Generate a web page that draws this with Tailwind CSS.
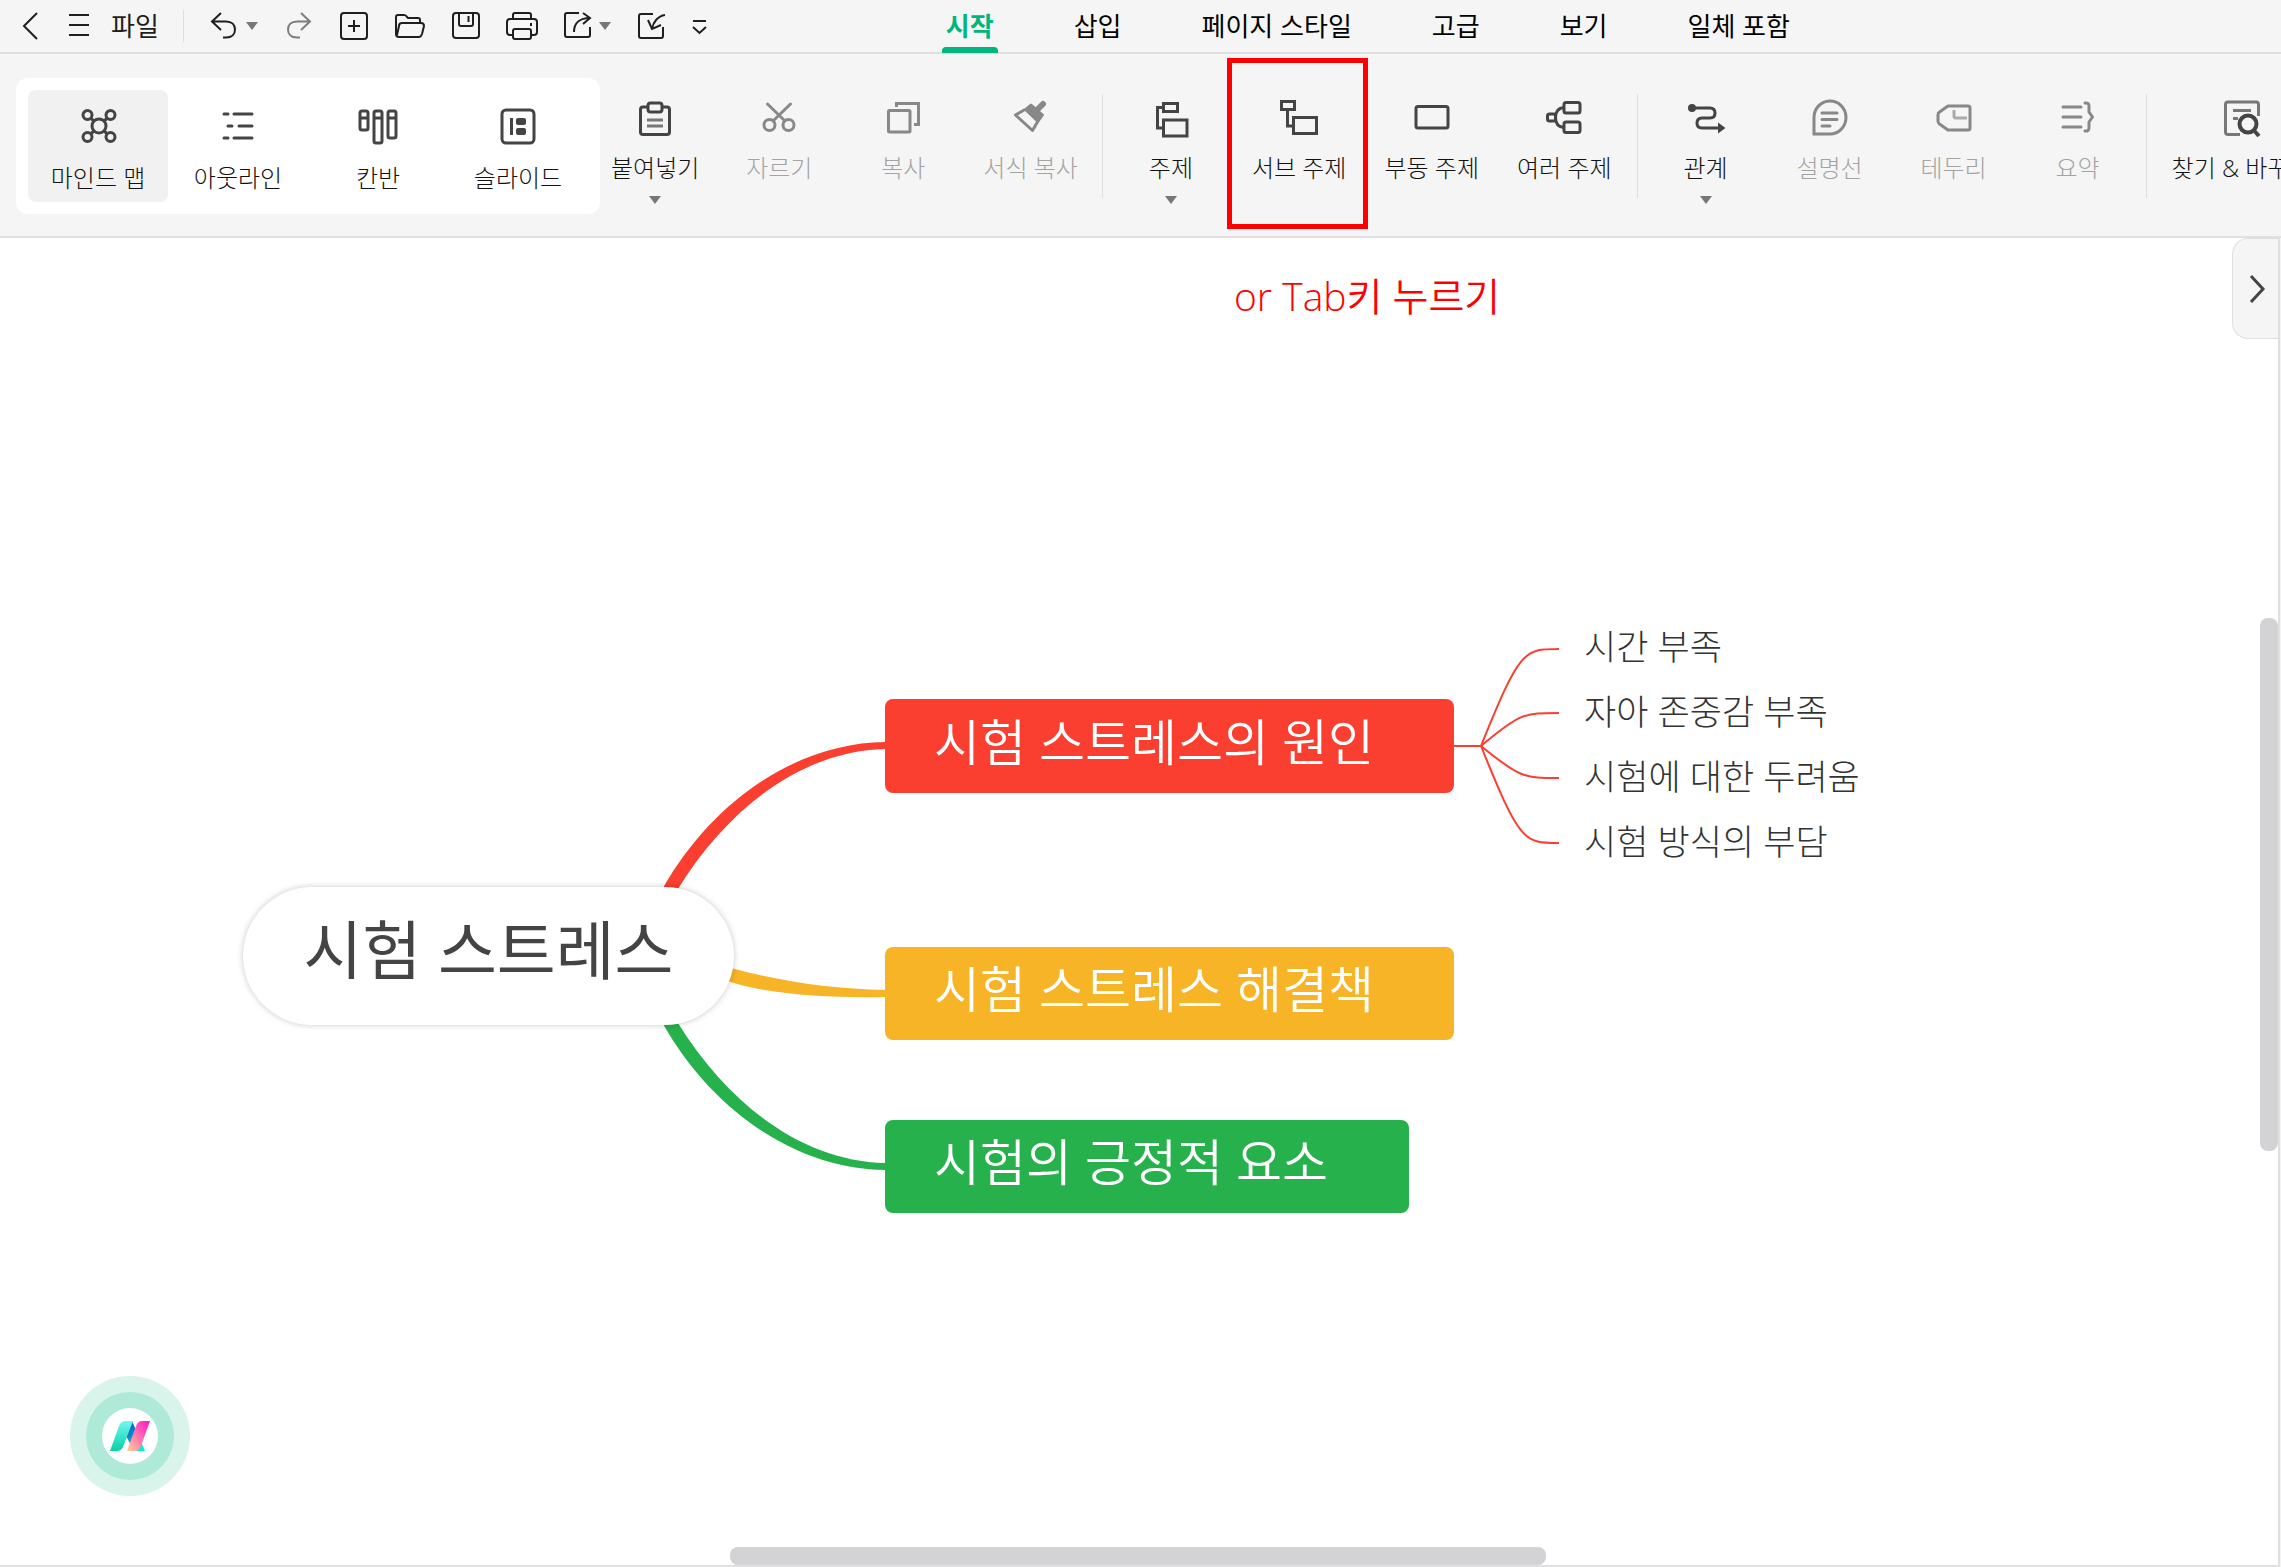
<!DOCTYPE html>
<html lang="ko">
<head>
<meta charset="utf-8">
<title>시험 스트레스</title>
<script src="https://cdn.jsdelivr.net/npm/@tailwindcss/browser@4"></script>
</head>
<body class="h-screen flex flex-col overflow-hidden bg-[#f4f4f4] text-black font-['Open_Sans','Noto_Sans_CJK_KR',sans-serif]">

<!-- Title bar: file actions and tabs -->
<header class="flex items-center h-[54px] shrink-0 bg-[#f5f5f5] border-b-2 border-[#e0e0e0] text-[#1f1f1f] pl-[15px] whitespace-nowrap">
  <div class="flex items-center gap-4">
    <button aria-label="뒤로"><svg class="block size-8" viewBox="0 0 32 32" fill="none" stroke="currentColor" stroke-width="2"><path d="M22 3L9 16L22 29"/></svg></button>
    <button aria-label="메뉴"><svg class="block size-8" viewBox="0 0 32 32" fill="none" stroke="currentColor" stroke-width="2"><path d="M6 5H26M6 15H26M6 25H26"/></svg></button>
    <button class="text-[26px] leading-8">파일</button>
  </div>
  <div class="w-px h-8 bg-[#dedede] ml-6 mr-6"></div>
  <div class="flex items-center gap-6">
    <div class="flex items-center gap-[6px]">
      <button aria-label="실행 취소"><svg class="block size-8" viewBox="0 0 32 32" fill="none" stroke="currentColor" stroke-width="2"><path d="M13 3L4 11.500L13 20M4.500 11.500H18C24 11.500 27 15 27 19.500S24 27.500 18 27.500H15"/></svg></button>
      <button aria-label="실행 취소 목록"><svg class="block w-3 h-2 text-[#777]" viewBox="0 0 12 8" fill="currentColor"><path d="M0 0H12L6 8Z"/></svg></button>
    </div>
    <button aria-label="다시 실행" class="text-[#7d7d7d]"><svg class="block size-8" viewBox="0 0 32 32" fill="none" stroke="currentColor" stroke-width="2"><path d="M19 3L28 11.500L19 20M27.500 11.500H15C9 11.500 6 15 6 19.500S9 27.500 15 27.500H18"/></svg></button>
    <button aria-label="새로 만들기"><svg class="block size-8" viewBox="0 0 32 32" fill="none" stroke="currentColor" stroke-width="2"><rect x="3" y="3" width="26" height="26" rx="3"/><path d="M10 16H22M16 10V22"/></svg></button>
    <button aria-label="열기"><svg class="block size-8" viewBox="0 0 32 32" fill="none" stroke="currentColor" stroke-width="2" stroke-linejoin="round"><path d="M2 24V7Q2 5 4 5H10Q12 5 13 7L14 8H24Q26 8 26 10V13"/><path d="M2 24Q2 27 5 27H25Q27 27 28 24L30 16Q30 13 27 13H8Q5 13 5 16L3 25"/></svg></button>
    <button aria-label="저장"><svg class="block size-8" viewBox="0 0 32 32" fill="none" stroke="currentColor" stroke-width="2"><rect x="3" y="3" width="26" height="25" rx="3"/><path d="M9 3V14Q9 16 11 16H21Q23 16 23 14V3M18.500 6V12"/></svg></button>
    <button aria-label="인쇄"><svg class="block size-8" viewBox="0 0 32 32" fill="none" stroke="currentColor" stroke-width="2"><path d="M7 9V5Q7 3 9 3H23Q25 3 25 5V9"/><path d="M7 25H4Q1 25 1 22V12Q1 9 4 9H28Q31 9 31 12V22Q31 25 28 25H25M25 13V16"/><rect x="7" y="19" width="18" height="10" rx="2"/></svg></button>
    <div class="flex items-center gap-[5px]">
      <button aria-label="내보내기"><svg class="block size-8" viewBox="0 0 32 32" fill="none" stroke="currentColor" stroke-width="2"><path d="M17 3H5Q3 3 3 5V25Q3 27 5 27H26Q28 27 28 25V17M21 3L28 8L21 14M28 8C18 8 12 13 12 22"/></svg></button>
      <button aria-label="내보내기 목록"><svg class="block w-3 h-2 text-[#777]" viewBox="0 0 12 8" fill="currentColor"><path d="M0 0H12L6 8Z"/></svg></button>
    </div>
    <div class="flex items-center gap-4">
      <button aria-label="가져오기"><svg class="block size-8" viewBox="0 0 32 32" fill="none" stroke="currentColor" stroke-width="2"><path d="M18 4H6Q4 4 4 6V26Q4 28 6 28H26Q28 28 28 26V17M30 5C23 6 18 12 17 19M13 10L17 19L26 15"/></svg></button>
      <button aria-label="더 보기"><svg class="block size-8" viewBox="0 0 32 32" fill="none" stroke="currentColor" stroke-width="2"><path d="M10 11H23M10 17L16.500 23L23 17"/></svg></button>
    </div>
  </div>
  <nav class="flex items-stretch gap-20 h-[52px] ml-[231px] text-[26px] leading-[52px] text-black">
    <a href="#" class="relative font-bold text-[#00b67f]">시작<span class="absolute inset-x-[-4px] bottom-[-1px] h-[6px] rounded-t bg-[#00b67f]"></span></a>
    <a href="#">삽입</a>
    <a href="#">페이지 스타일</a>
    <a href="#">고급</a>
    <a href="#">보기</a>
    <a href="#">일체 포함</a>
  </nav>
</header>

<!-- Ribbon -->
<section class="flex items-start h-[184px] shrink-0 overflow-hidden bg-[#f5f5f5] border-b-2 border-[#e0e0e0] pl-4 pt-6 whitespace-nowrap text-2xl/6 font-light text-[#111]">
  <div class="flex shrink-0 bg-white rounded-xl p-3 *:flex *:flex-col *:items-center *:gap-5 *:w-[140px] *:h-28 *:pt-4 *:rounded-lg">
    <button class="bg-[#f1f1f1]"><svg class="size-10" viewBox="0 0 40 40" fill="none" stroke="#444" stroke-width="3"><circle cx="21" cy="20" r="7"/><circle cx="9.500" cy="9" r="4.500"/><circle cx="32.500" cy="9" r="4.500"/><circle cx="9.500" cy="31" r="4.500"/><circle cx="32.500" cy="31" r="4.500"/><path d="M12.500 12L16.500 15.500M29.500 12L25.500 15.500M12.500 28L16.500 24.500M29.500 28L25.500 24.500"/></svg>마인드 맵</button>
    <button><svg class="size-10" viewBox="0 0 40 40" fill="none" stroke="#444" stroke-width="3" stroke-linecap="round"><path d="M6 8H10M16 8H34M10 20H14M21 20H34M6 32H10M16 32H34"/></svg>아웃라인</button>
    <button><svg class="size-10" viewBox="0 0 40 40" fill="none" stroke="#444" stroke-width="3"><rect x="2" y="5" width="8" height="19" rx="2"/><rect x="16" y="5" width="8" height="32" rx="2"/><rect x="30" y="5" width="8" height="27" rx="2"/><path d="M2 12H10M16 12H24M30 12H38"/></svg>칸반</button>
    <button><svg class="size-10" viewBox="0 0 40 40" fill="none" stroke="#444" stroke-width="3"><rect x="4" y="4" width="32" height="33" rx="4"/><path d="M13.500 12V29"/><g fill="#444" stroke="none"><rect x="18" y="12" width="10" height="7" rx="2"/><rect x="18" y="22" width="10" height="7" rx="2"/></g></svg>슬라이드</button>
  </div>

  <div class="flex shrink-0 gap-6 ml-[5px] pt-5 *:flex *:flex-col *:items-center *:min-w-[100px] *:px-[6px]">
    <button><svg class="size-10 mb-[18px]" viewBox="0 0 40 40" fill="none" stroke="#444" stroke-width="3"><path d="M13 9H8Q5.500 9 5.500 11.500V34Q5.500 36.500 8 36.500H32Q34.500 36.500 34.500 34V11.500Q34.500 9 32 9H27"/><rect x="13" y="5" width="14" height="9" rx="2.500"/><path stroke="#777" d="M12 22H28M12 28H28"/></svg>붙여넣기<svg class="w-3 h-2 mt-4" viewBox="0 0 12 8" fill="#777"><path d="M0 0H12L6 8Z"/></svg></button>
    <button disabled class="text-[#a3a3a3]"><svg class="size-10 mb-[18px]" viewBox="0 0 40 40" fill="none" stroke="#888" stroke-width="3" stroke-linecap="round"><circle cx="10.500" cy="27" r="5.500"/><circle cx="29.500" cy="27" r="5.500"/><path d="M31.500 6L14 23M8.500 6L26 23"/></svg>자르기</button>
    <button disabled class="text-[#a3a3a3]"><svg class="size-10 mb-[18px]" viewBox="0 0 40 40" fill="none" stroke="#888" stroke-width="3"><rect x="5.500" y="12.500" width="21.500" height="21.500" rx="1"/><path d="M13.500 9V5.500H35.500V26.500H31"/></svg>복사</button>
    <button disabled class="text-[#a3a3a3]"><svg class="size-10 mb-[18px]" viewBox="0 0 40 40" fill="none" stroke="#888" stroke-width="3" stroke-linejoin="round"><path d="M14 11.500L4.500 17L21.500 32.500L27 23"/><path fill="#888" stroke-width="2" d="M14 11.500L20 6.500L32 17L27 24Z"/><path stroke-width="6" stroke-linecap="round" d="M26 12L32 6"/></svg>서식 복사</button>
  </div>
  <div class="w-px h-[104px] bg-[#dedede] shrink-0 mt-4 mx-[18px]"></div>
  <div class="flex shrink-0 gap-6 pt-5 *:flex *:flex-col *:items-center *:min-w-[100px] *:px-[7px]">
    <button><svg class="size-10 mb-[18px]" viewBox="0 0 40 40" fill="none" stroke="#444" stroke-width="3"><rect x="12.500" y="5.500" width="14" height="8"/><rect x="12.500" y="22" width="23.500" height="16"/><path d="M12 9.500H6.500V30H12"/></svg>주제<svg class="w-3 h-2 mt-4" viewBox="0 0 12 8" fill="#777"><path d="M0 0H12L6 8Z"/></svg></button>
    <button class="relative"><svg class="size-10 mb-[18px]" viewBox="0 0 40 40" fill="none" stroke="#444" stroke-width="3"><rect x="2.500" y="3.500" width="13" height="8"/><rect x="14.500" y="19.500" width="23" height="16"/><path d="M8.500 12V28H14"/></svg>서브 주제<span class="absolute left-[-18px] top-[-40px] w-[141px] h-[171px] border-[5px] border-[#f00]"></span></button>
    <button><svg class="size-10 mb-[18px]" viewBox="0 0 40 40" fill="none" stroke="#444" stroke-width="3"><rect x="4" y="8.500" width="32" height="21.500" rx="2"/></svg>부동 주제</button>
    <button><svg class="size-10 mb-[18px]" viewBox="0 0 40 40" fill="none" stroke="#444" stroke-width="3"><rect x="3.500" y="16" width="8" height="7" rx="2"/><rect x="20" y="4.500" width="16" height="10.500" rx="2"/><rect x="20" y="24" width="16" height="10.500" rx="2"/><path d="M20 9.500C14 10 11.500 13 11.500 19.500S14 29 20 29.500"/></svg>여러 주제</button>
  </div>
  <div class="w-px h-[104px] bg-[#dedede] shrink-0 mt-4 mx-[18px]"></div>
  <div class="flex shrink-0 gap-6 pt-5 *:flex *:flex-col *:items-center *:min-w-[100px] *:px-[7px]">
    <button><svg class="size-10 mb-[18px]" viewBox="0 0 40 40" fill="none" stroke="#444" stroke-width="3"><path d="M6 10H24Q29 10 29 15T24 20H16Q11 20 11 25T16 30H34"/><circle cx="6" cy="10" r="4" fill="#444" stroke="none"/><path fill="#444" stroke="none" d="M32 24.500L39.500 30L32 35.500Z"/></svg>관계<svg class="w-3 h-2 mt-4" viewBox="0 0 12 8" fill="#777"><path d="M0 0H12L6 8Z"/></svg></button>
    <button disabled class="text-[#a3a3a3]"><svg class="size-10 mb-[18px]" viewBox="0 0 40 40" fill="none" stroke="#888" stroke-width="3" stroke-linecap="round"><path d="M4 36V20A16 16.500 0 1 1 20 36Z"/><path d="M12 15H27M12 21.500H27M12 28H20"/></svg>설명선</button>
    <button disabled class="text-[#a3a3a3]"><svg class="size-10 mb-[18px]" viewBox="0 0 40 40" fill="none" stroke="#888" stroke-width="3" stroke-linejoin="round"><path d="M14 8H34Q36 8 36 10V30Q36 32 34 32H14L5.500 26Q4 25 4 23V17Q4 15 5.500 14Z"/><path stroke="#aaa" d="M20 12V18Q20 20 22 20H33"/></svg>테두리</button>
    <button disabled class="text-[#a3a3a3]"><svg class="size-10 mb-[18px]" viewBox="0 0 40 40" fill="none" stroke="#888" stroke-width="3" stroke-linecap="round" stroke-linejoin="round"><path d="M5 9H23M5 19H23M5 29H23M27 5Q31 4.500 31 8V14L34.500 19L31 24V30Q31 33.500 27 33"/></svg>요약</button>
  </div>
  <div class="w-px h-[104px] bg-[#dedede] shrink-0 mt-4 mx-[18px]"></div>
  <div class="flex shrink-0 pt-5">
    <button class="flex flex-col items-center px-[7px]"><svg class="size-10 mb-[18px]" viewBox="0 0 40 40" fill="none" stroke="#777" stroke-width="3"><path d="M18 36.500H6Q3.500 36.500 3.500 34V6.500Q3.500 4 6 4H34Q36.500 4 36.500 6.500V18M11 12.500H29M11 20.500H16"/><g stroke="#444" stroke-width="4"><circle cx="26" cy="26" r="8.500"/><path d="M31.500 32L37 38"/></g></svg>찾기 &amp; 바꾸기</button>
  </div>
</section>

<!-- Canvas -->
<main class="relative flex-1 mr-px bg-white border-r-2 border-b-2 border-[#e0e0e0] overflow-hidden">
  <svg class="absolute inset-0 size-full" fill="none">
    <g transform="translate(0 -238)">
      <path fill="#fa3e30" d="M663 888C715 797 800 743 885 742V749C802 751 728 808 678 889Z"/>
      <path fill="#f8b427" d="M731 968C780 981 830 989 886 990V997C830 998 770 995 727 981Z"/>
      <path fill="#27b14c" d="M663 1024C715 1115 800 1169 885 1170V1163C802 1161 728 1104 678 1023Z"/>
      <g stroke="#fa3e30" stroke-width="2">
        <path d="M1453 746H1481"/>
        <path d="M1481 746C1520 649 1524 649 1559 649"/>
        <path d="M1481 746C1520 713 1524 713 1559 713"/>
        <path d="M1481 746C1520 778 1524 778 1559 778"/>
        <path d="M1481 746C1520 843 1524 843 1559 843"/>
      </g>
    </g>
  </svg>

  <p class="absolute left-[1234px] top-[33px] text-[39px] leading-[50px] font-[350] text-[#f00] whitespace-nowrap">or Tab키 누르기</p>

  <div class="absolute left-[243px] top-[649px] w-[491px] h-[138px] pb-3 rounded-full bg-white shadow-[0_0_6px_rgba(0,0,0,0.22)] flex items-center justify-center text-[64px] text-[#444] whitespace-nowrap">시험 스트레스</div>

  <div class="absolute left-[885px] top-[461px] w-[569px] h-[94px] pl-[49px] pb-2 rounded-lg bg-[#fa3e30] flex items-center text-[50px] font-[350] text-white whitespace-nowrap">시험 스트레스의 원인</div>
  <div class="absolute left-[885px] top-[709px] w-[569px] h-[93px] pl-[49px] pb-2 rounded-lg bg-[#f8b427] flex items-center text-[50px] font-[350] text-white whitespace-nowrap">시험 스트레스 해결책</div>
  <div class="absolute left-[885px] top-[882px] w-[524px] h-[93px] pl-[49px] pb-2 rounded-lg bg-[#27b14c] flex items-center text-[50px] font-[350] text-white whitespace-nowrap">시험의 긍정적 요소</div>

  <ul class="absolute left-[1584px] top-[376px] text-[35px] leading-[65px] font-light text-[#333] whitespace-nowrap">
    <li>시간 부족</li>
    <li>자아 존중감 부족</li>
    <li>시험에 대한 두려움</li>
    <li>시험 방식의 부담</li>
  </ul>

  <!-- AI assistant -->
  <button aria-label="AI" class="absolute left-[70px] bottom-[69px] size-[120px] rounded-full bg-[#d9f4eb] p-4">
    <span class="flex size-[88px] rounded-full bg-[#aeead7] p-4">
      <svg class="size-14 rounded-full bg-white" viewBox="0 0 56 56">
        <defs>
          <linearGradient id="teal" x1="0" y1="0" x2="0" y2="1"><stop offset="0" stop-color="#72f7f2"/><stop offset="1" stop-color="#05d2a4"/></linearGradient>
          <linearGradient id="pink" x1="1" y1="0" x2="0" y2="1"><stop offset="0" stop-color="#ff10cf"/><stop offset="1" stop-color="#ffd393"/></linearGradient>
          <linearGradient id="blue" x1="0" y1="0" x2="0.4" y2="1"><stop offset="0" stop-color="#0559c0"/><stop offset="0.500" stop-color="#0a84cc"/><stop offset="1" stop-color="#00f0cc"/></linearGradient>
        </defs>
        <path fill="url(#blue)" d="M30 13L43 43H32L23 26Z"/>
        <path fill="url(#teal)" d="M8 43L17 18Q19 13 24 13H31L21 39Q19 43 15 43Z"/>
        <path fill="url(#pink)" d="M25 43L34 18Q36 13 40 13H48L39 38Q37 43 33 43Z"/>
      </svg>
    </span>
  </button>

  <!-- Side panel toggle -->
  <button aria-label="패널 열기" class="absolute right-0 top-0 w-[46px] h-[101px] rounded-l-2xl border border-r-0 border-[#e0e0e0] bg-[#f5f5f5] flex items-center justify-center">
    <svg class="w-5 h-8" viewBox="0 0 20 32" fill="none" stroke="#444" stroke-width="3"><path d="M5 3L17 16L5 29"/></svg>
  </button>

  <!-- Scrollbars -->
  <div class="absolute right-0 top-[380px] w-[18px] h-[533px] rounded-lg bg-[#d3d3d5]"></div>
  <div class="absolute bottom-0 left-[730px] w-[816px] h-[18px] rounded-lg bg-[#d3d3d5]"></div>
</main>
</body>
</html>
